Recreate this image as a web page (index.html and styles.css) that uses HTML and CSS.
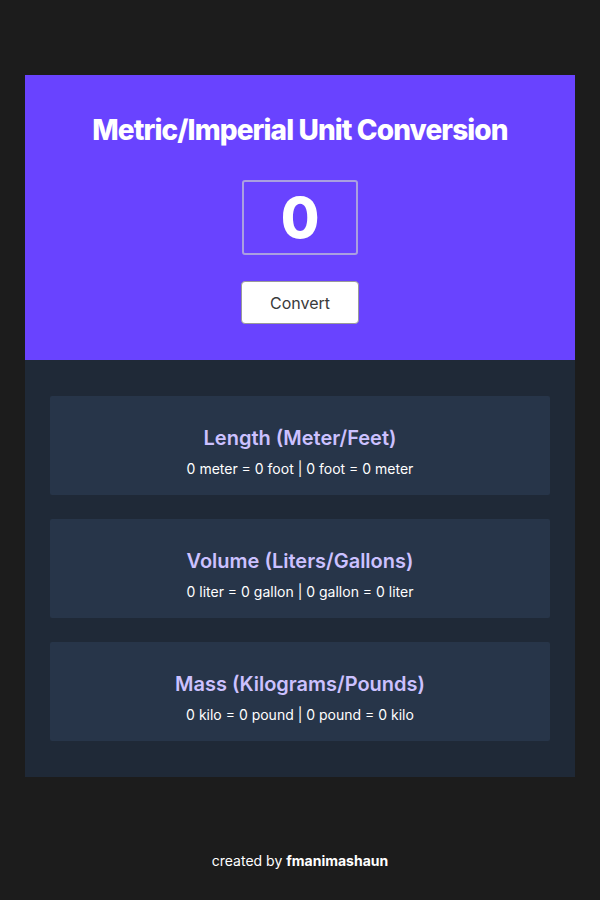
FILE: index.html
```html
<!DOCTYPE html>
<html lang="en">
<head>
<meta charset="utf-8">
<title>Unit Conversion</title>
<link rel="stylesheet" href="styles.css">
</head>
<body>
<main class="app">
  <section class="hero">
    <h1 class="title">Metric/Imperial Unit Conversion</h1>
    <input class="num-input" type="text" value="0">
    <button class="convert-btn">Convert</button>
  </section>
  <section class="results">
    <div class="card">
      <h2 class="card-title">Length (Meter/Feet)</h2>
      <p class="card-text">0 meter = 0 foot | 0 foot = 0 meter</p>
    </div>
    <div class="card">
      <h2 class="card-title">Volume (Liters/Gallons)</h2>
      <p class="card-text">0 liter = 0 gallon | 0 gallon = 0 liter</p>
    </div>
    <div class="card">
      <h2 class="card-title">Mass (Kilograms/Pounds)</h2>
      <p class="card-text">0 kilo = 0 pound | 0 pound = 0 kilo</p>
    </div>
  </section>
</main>
<footer class="footer">created by <strong>fmanimashaun</strong></footer>
</body>
</html>
```
FILE: styles.css
```css
* { box-sizing: border-box; }
html, body { margin: 0; padding: 0; }
body {
  background: #1c1c1c;
  font-family: Inter, "Noto Sans", sans-serif;
  color: #fff;
  min-height: 900px;
  display: flex;
  flex-direction: column;
  align-items: center;
  padding-top: 75px;
}
.app {
  width: 550px;
  display: flex;
  flex-direction: column;
}
.hero {
  background: #6943ff;
  height: 285px;
  display: flex;
  flex-direction: column;
  align-items: center;
  padding-top: 38px;
}
.title {
  margin: 0;
  font-size: 28px;
  font-weight: 800;
  letter-spacing: -0.9px;
  line-height: 34px;
}
.num-input {
  margin-top: 33px;
  width: 116px;
  height: 75px;
  background: transparent;
  border: 2px solid #aa9fe0;
  border-radius: 3px;
  color: #fff;
  font-family: Inter, sans-serif;
  font-size: 56px;
  font-weight: 800;
  text-align: center;
  padding: 0;
}
.convert-btn {
  margin-top: 26px;
  width: 118px;
  height: 43px;
  background: #fff;
  border: 1px solid #9a9a9a;
  border-radius: 4px;
  font-family: Inter, sans-serif;
  font-size: 16px;
  color: #3a3a3a;
}
.results {
  background: #1f2937;
  padding: 36px 25px;
  display: flex;
  flex-direction: column;
  gap: 24px;
}
.card {
  background: #273549;
  border-radius: 2px;
  height: 99px;
  display: flex;
  flex-direction: column;
  align-items: center;
  justify-content: center;
  padding-top: 11px;
}
.card-title {
  margin: 0;
  color: #ccc1ff;
  font-size: 20px;
  font-weight: 600;
  line-height: 26px;
}
.card-text {
  margin: 9px 0 0;
  font-size: 14px;
  line-height: 18px;
}
.footer {
  margin-top: auto;
  padding-bottom: 31px;
  font-size: 14px;
}
.footer strong { font-weight: 700; }
```
